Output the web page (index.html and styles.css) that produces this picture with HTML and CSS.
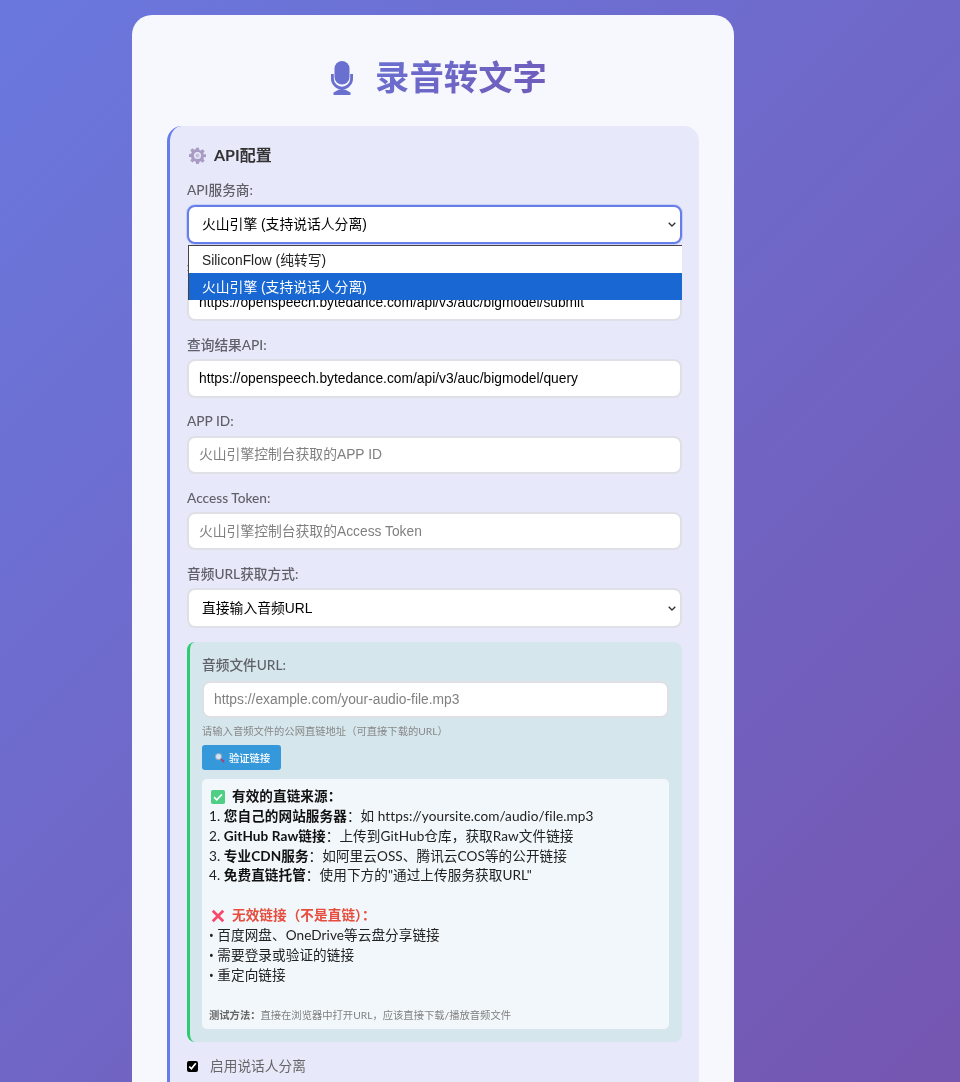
FILE: index.html
```html
<!DOCTYPE html>
<html lang="zh-CN">
<head>
<meta charset="utf-8">
<title>录音转文字</title>
<link rel="stylesheet" href="styles.css">
</head>
<body>
<main class="card">
  <h1 class="title">
    <svg class="mic" viewBox="0 0 22 34"><rect x="3.500" y="0" width="15" height="23.500" rx="7.500" fill="#6a70cf"/><path d="M1.400 13v4.500a9.600 9.600 0 0 0 19.200 0V13" fill="none" stroke="#6a70cf" stroke-width="2.800"/><path d="M9.500 26h3v3h-3z" fill="#6a70cf"/><path d="M8 28.500h6l5.500 3v2.500H2.500v-2.500z" fill="#6a70cf"/></svg>
    <span class="title-text">录音转文字</span>
  </h1>
  <section class="panel">
    <h2 class="panel-title">
      <svg class="gear" viewBox="0 0 24 24"><path fill="#a99cc4" d="M10 1h4l.6 3.300 1.900.8 2.800-1.900 2.800 2.800-1.900 2.800.8 1.900L24 10v4l-3 .6-.8 1.900 1.900 2.800-2.800 2.800-2.800-1.900-1.900.8L14 24h-4l-.6-3.300-1.900-.8-2.800 1.900-2.800-2.800 1.900-2.800-.8-1.900L0 14v-4l3-.6.8-1.900L1.900 4.700l2.800-2.800 2.800 1.900 1.900-.8z"/><circle cx="12" cy="12" r="5" fill="#e7e9fa"/><circle cx="12" cy="12" r="3" fill="#c8bfd8"/></svg>
      API配置
    </h2>
    <div class="field field-first">
      <label class="label">API服务商:</label>
      <select class="control select focused">
        <option>SiliconFlow (纯转写)</option>
        <option selected>火山引擎 (支持说话人分离)</option>
      </select>
      <ul class="dropdown">
        <li class="dropdown-item">SiliconFlow (纯转写)</li>
        <li class="dropdown-item active">火山引擎 (支持说话人分离)</li>
      </ul>
    </div>
    <div class="field">
      <label class="label">提交任务API:</label>
      <input class="control" value="https://openspeech.bytedance.com/api/v3/auc/bigmodel/submit">
    </div>
    <div class="field">
      <label class="label">查询结果API:</label>
      <input class="control" value="https://openspeech.bytedance.com/api/v3/auc/bigmodel/query">
    </div>
    <div class="field">
      <label class="label">APP ID:</label>
      <input class="control" placeholder="火山引擎控制台获取的APP ID">
    </div>
    <div class="field">
      <label class="label">Access Token:</label>
      <input class="control" placeholder="火山引擎控制台获取的Access Token">
    </div>
    <div class="field">
      <label class="label">音频URL获取方式:</label>
      <select class="control select">
        <option>直接输入音频URL</option>
      </select>
    </div>
    <div class="url-box">
      <label class="label">音频文件URL:</label>
      <input class="control" placeholder="https://example.com/your-audio-file.mp3">
      <p class="hint">请输入音频文件的公网直链地址（可直接下载的URL）</p>
      <button class="verify" type="button">
        <svg class="btn-icon" viewBox="0 0 12 12"><circle cx="5" cy="5" r="3.400" fill="#cfe6f5" stroke="#8fa9bd" stroke-width="1.200"/><path d="M7.600 7.600L11 11" stroke="#b5366b" stroke-width="1.800"/></svg>
        验证链接
      </button>
      <div class="info">
        <div class="line head"><svg class="mark" viewBox="0 0 16 16"><rect width="16" height="16" rx="2" fill="#4fcf86"/><path d="M3.500 8.200l3 3 6-6.200" fill="none" stroke="#fff" stroke-width="1.800"/></svg><b>有效的直链来源：</b></div>
        <div class="line">1. <b>您自己的网站服务器</b>：如 https://yoursite.com/audio/file.mp3</div>
        <div class="line">2. <b>GitHub Raw链接</b>：上传到GitHub仓库，获取Raw文件链接</div>
        <div class="line">3. <b>专业CDN服务</b>：如阿里云OSS、腾讯云COS等的公开链接</div>
        <div class="line">4. <b>免费直链托管</b>：使用下方的"通过上传服务获取URL"</div>
        <div class="line blank"></div>
        <div class="line head bad"><svg class="mark" viewBox="0 0 16 16"><path d="M2 2l12 12M14 2L2 14" stroke="#f4476b" stroke-width="3.200" fill="none"/></svg><b>无效链接（不是直链）：</b></div>
        <div class="line"><span class="bullet">•</span> 百度网盘、OneDrive等云盘分享链接</div>
        <div class="line"><span class="bullet">•</span> 需要登录或验证的链接</div>
        <div class="line"><span class="bullet">•</span> 重定向链接</div>
        <div class="line blank"></div>
        <div class="line note"><b>测试方法：</b>直接在浏览器中打开URL，应该直接下载/播放音频文件</div>
      </div>
    </div>
    <label class="check-row"><input class="check" type="checkbox" checked><span>启用说话人分离</span></label>
  </section>
</main>
</body>
</html>
```
FILE: styles.css
```css
* { box-sizing: border-box; }
html, body { margin: 0; height: 1082px; overflow: hidden; }
body {
  padding: 15px 226px 0 132px;
  background: linear-gradient(135deg, #6a78de 0%, #7556b0 100%);
  font-family: Lato, "Noto Sans CJK SC", sans-serif;
  color: #333;
}
.card {
  width: 602px;
  height: 1200px;
  padding: 35px 35px 0;
  background: #f7f8fe;
  border-radius: 20px;
  filter: blur(0.35px);
}
.title {
  display: flex;
  justify-content: center;
  align-items: center;
  gap: 22px;
  height: 56px;
  margin: -3px 0 23px;
  padding-left: 12px;
  font-size: 34.400px;
  font-weight: 700;
  line-height: 56px;
}
.title-text {
  background: linear-gradient(135deg, #6a72d2, #7059b8);
  -webkit-background-clip: text;
  background-clip: text;
  color: transparent;
  font-family: "Noto Sans CJK SC", sans-serif;
}
.mic { width: 22px; height: 34px; margin-top: 6px; }
.panel {
  padding: 20px 17px 0 17px;
  height: 1100px;
  background: #e7e9fa;
  border-left: 3px solid #667eea;
  border-radius: 15px;
}
.panel-title {
  display: flex;
  align-items: center;
  gap: 8px;
  height: 20px;
  margin: -1px 0 16px 2px;
  font-size: 16px;
  font-weight: 700;
  line-height: 20px;
  color: #333;
}
.gear { width: 17px; height: 17px; }
.field { position: relative; margin-bottom: 14.500px; }
.field-first { margin-bottom: 15.700px; }
.label {
  display: block;
  height: 19px;
  margin-bottom: 4.500px;
  font-size: 13.700px;
  line-height: 17px;
  font-weight: 500;
  color: #606068;
}
.control {
  display: block;
  width: 100%;
  height: 38.300px;
  padding: 0 10px;
  border: 2px solid #dfe0e6;
  border-radius: 8px;
  background: #fff;
  font-family: "Liberation Sans", "Noto Sans CJK SC", sans-serif;
  font-size: 13.800px;
  color: #000;
  outline: none;
}
.control::placeholder { color: #808080; }
.select {
  height: 39.500px;
  padding-left: 13px;
  appearance: none;
  background: #fff url("data:image/svg+xml,%3Csvg xmlns='http://www.w3.org/2000/svg' viewBox='0 0 8 5'%3E%3Cpath d='M.7.7L4 4l3.300-3.300' fill='none' stroke='%23333' stroke-width='1.300'/%3E%3C/svg%3E") no-repeat right 4.500px center / 8px 5px;
}
.focused { border-color: #667eea; box-shadow: 0 0 0 1px rgba(102, 126, 234, 0.25); }
.dropdown {
  position: absolute;
  top: 63.500px;
  left: 1px;
  right: 0;
  z-index: 2;
  margin: 0;
  padding: 0;
  list-style: none;
  background: #fff;
  border-top: 1px solid #444;
  border-left: 1px solid #444;
  font-family: "Liberation Sans", "Noto Sans CJK SC", sans-serif;
  font-size: 13.800px;
}
.dropdown-item { height: 27px; padding: 2px 0 0 13px; line-height: 25px; color: #222; }
.dropdown-item.active { background: #1967d2; color: #fff; }
.url-box {
  padding: 14px 13px 13px 12px;
  background: #d5e6ec;
  border-left: 3px solid #2ecc71;
  border-radius: 8px;
}
.url-box .label { margin-bottom: 5.500px; }
.url-box .control { height: 37.500px; }
.hint { margin: 5.500px 0 7px; height: 14px; font-size: 10.300px; line-height: 14px; color: #888; }
.verify {
  display: flex;
  align-items: center;
  gap: 4px;
  width: 79px;
  height: 25px;
  padding: 0 0 0 12px;
  border: 0;
  border-radius: 3px;
  background: #3498db;
  color: #fff;
  font-family: inherit;
  font-size: 10.300px;
  font-weight: 500;
}
.btn-icon { width: 11px; height: 11px; }
.info {
  margin-top: 9px;
  padding: 8px 7px 3px;
  background: #f1f7fb;
  border-radius: 5px;
  font-size: 13.600px;
  letter-spacing: 0.08px;
  color: #222;
}
.line { height: 19.900px; line-height: 19.900px; white-space: nowrap; }
.line b { font-weight: 700; color: #111; }
.bullet { font-family: "Noto Sans", sans-serif; font-size: 12.500px; }
.head { display: flex; align-items: center; gap: 7px; padding-left: 2px; }
.mark { width: 14px; height: 14px; }
.bad b { color: #e74c3c; }
.note { font-size: 10.300px; color: #808080; letter-spacing: 0; }
.note b { font-weight: 600; color: #666; }
.check-row {
  display: flex;
  align-items: center;
  gap: 12px;
  margin-top: 13px;
  height: 20px;
  font-size: 13.700px;
  color: #666;
}
.check { width: 11px; height: 11px; margin: 3px 0 0; accent-color: #000; }
```
